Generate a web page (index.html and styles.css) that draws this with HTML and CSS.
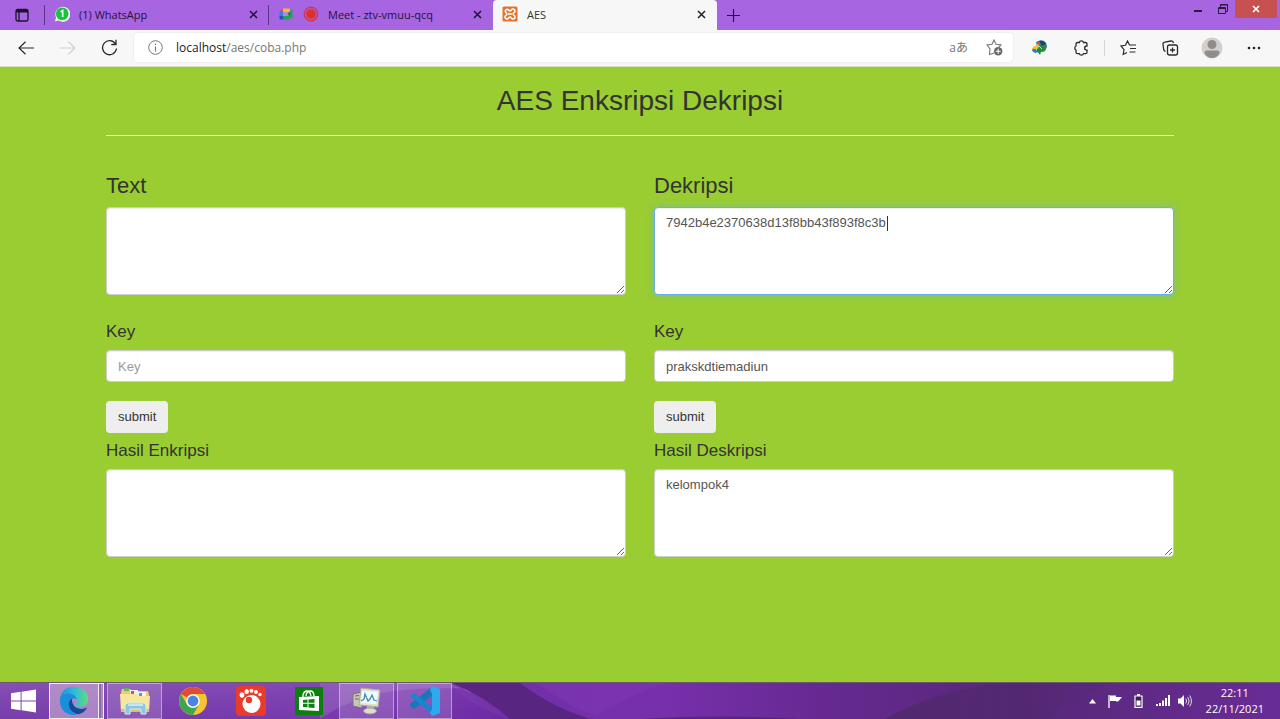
FILE: index.html
```html
<!DOCTYPE html>
<html lang="id">
<head>
<meta charset="utf-8">
<meta name="viewport" content="width=device-width, initial-scale=1">
<title>AES</title>
<link rel="stylesheet" href="styles.css">
</head>
<body>
<header class="browser">
  <div class="tabstrip">
    <button class="tab-actions" aria-label="Tab actions"><svg width="14" height="14" viewBox="0 0 14 14" fill="none" stroke="#1d1230" stroke-width="1.3"><rect x="1" y="1.5" width="12" height="11.5" rx="1.8"/><path d="M1 3h12" stroke-width="3"/><path d="M4 4v9"/></svg></button>
    <div class="tab">
      <svg width="16" height="16" viewBox="0 0 17 17"><path d="M1 16.500l1.200-4.300A8 8 0 1 1 5 15.400z" fill="#e9f6e9"/><circle cx="8.700" cy="8.300" r="6.700" fill="#17c53c"/><path d="M7 6.200l2.200-1.400v7" fill="none" stroke="#fff" stroke-width="1.700"/></svg>
      <span class="tab-title">(1) WhatsApp</span>
      <button class="tab-close" aria-label="Close tab"><svg width="9" height="9" viewBox="0 0 9 9" stroke="#1d1230" stroke-width="1.500"><path d="M1 1l7 7M8 1l-7 7"/></svg></button>
    </div>
    <div class="tab">
      <svg width="16" height="16" viewBox="0 0 16 16"><path d="M5 2.500h6q1 0 1 1V6H5z" fill="#f5bd21"/><path d="M1.500 6L5 2.500V6z" fill="#e8453c"/><path d="M1.500 6H5v4H1.500z" fill="#3b79dd"/><path d="M1.500 10H5v3.500H2.500q-1 0-1-1z" fill="#1f4fc0"/><path d="M5 10h7v2.500q0 1-1 1H5zM12 5l2.500-2v10L12 11z" fill="#20a650"/><path d="M5 6h5l2 2-2 2H5z" fill="#b28ad8"/><path d="M9.500 8L12 5.500v5z" fill="#167b38"/></svg>
      <svg width="16" height="16" viewBox="0 0 16 16"><circle cx="8" cy="8" r="6.800" fill="#b458a8" stroke="#d9304b" stroke-width="1.200"/><circle cx="8" cy="8" r="4.700" fill="#de3029"/></svg>
      <span class="tab-title">Meet - ztv-vmuu-qcq</span>
      <button class="tab-close" aria-label="Close tab"><svg width="9" height="9" viewBox="0 0 9 9" stroke="#1d1230" stroke-width="1.500"><path d="M1 1l7 7M8 1l-7 7"/></svg></button>
    </div>
    <div class="tab tab-active">
      <svg width="16" height="16" viewBox="0 0 16 16"><rect x=".5" y=".5" width="15" height="15" rx="1.500" fill="#e2752f"/><path d="M5.300 3.200a2 2 0 0 0-1 3.700q1.200 1.100 0 2.200a2 2 0 1 0 2.600 2.500q1.100-1.100 2.200 0a2 2 0 1 0 2.600-2.500q-1.200-1.100 0-2.200a2 2 0 1 0-2.600-2.500q-1.100 1.100-2.200 0a2 2 0 0 0-1.600-1.200zM6 8h4" fill="none" stroke="#fff" stroke-width="1.500"/></svg>
      <span class="tab-title">AES</span>
      <button class="tab-close" aria-label="Close tab"><svg width="9" height="9" viewBox="0 0 9 9" stroke="#222" stroke-width="1.500"><path d="M1 1l7 7M8 1l-7 7"/></svg></button>
    </div>
    <button class="new-tab" aria-label="New tab"><svg width="13" height="13" viewBox="0 0 13 13" stroke="#1d1230" stroke-width="1.200"><path d="M6.500 0v13M0 6.500h13"/></svg></button>
    <div class="window-buttons">
      <button class="window-button" aria-label="Minimize"><svg width="8" height="10" viewBox="0 0 8 10"><path d="M0 6h8v2H0z" fill="#2a1a45"/></svg></button>
      <button class="window-button" aria-label="Restore"><svg width="10" height="10" viewBox="0 0 10 10" fill="none" stroke="#2a1a45"><path d="M.5 3.500h7v6h-7zM.5 4.500h7M2.500 3V.5h7v7H8M2.500 1h7"/></svg></button>
      <button class="window-button window-close" aria-label="Close"><svg width="8" height="8" viewBox="0 0 8 8" stroke="#fff" stroke-width="1.700"><path d="M1 1l6 6M7 1l-6 6"/></svg></button>
    </div>
  </div>
  <nav class="toolbar">
    <button class="tool" aria-label="Back"><svg width="16" height="14" viewBox="0 0 16 14" fill="none" stroke="#2b2b2b" stroke-width="1.200"><path d="M16 7H1M7.500.7L1 7l6.500 6.300"/></svg></button>
    <button class="tool" aria-label="Forward"><svg width="16" height="14" viewBox="0 0 16 14" fill="none" stroke="#d2d2d2" stroke-width="1.200"><path d="M0 7h15M8.500.7L15 7l-6.500 6.300"/></svg></button>
    <button class="tool tool-refresh" aria-label="Refresh"><svg width="17" height="17" viewBox="0 0 17 17" fill="none" stroke="#2b2b2b" stroke-width="1.300"><path d="M15.500 9.500A7 7 0 1 1 14.500 5M15 .8V5.500h-4.700"/></svg></button>
    <div class="address">
      <svg width="15" height="15" viewBox="0 0 15 15" fill="none" stroke="#777"><circle cx="7.500" cy="7.500" r="6.800"/><path d="M7.500 6.500v5M7.500 3.500v1.500" stroke-width="1.200"/></svg>
      <a class="url" href="#"><span class="url-host">localhost</span>/aes/coba.php</a>
      <button class="translate" aria-label="Translate">aあ</button>
      <button class="favorite" aria-label="Add to favorites"><svg width="17" height="17" viewBox="0 0 17 17"><path d="M8.300 14L3.500 15.500 4 10 1 6l5-.7L8 1l2 4.300 5 .7-2 2" fill="none" stroke="#777" stroke-width="1.100"/><circle cx="12.200" cy="12.200" r="4.200" fill="#666"/><path d="M12.200 9.700v5M9.700 12.200h5" stroke="#fff" stroke-width="1.100"/></svg></button>
    </div>
    <div class="tools">
      <button class="tool" aria-label="Download manager"><svg width="17" height="15" viewBox="0 0 17 15"><path d="M5 2q5-3 8-1t3 6l-3 4H7z" fill="#2f80c9"/><path d="M8 1q5-1 7 3l-4 3z" fill="#2b4552"/><path d="M6.500 1l3 2-2 2.500z" fill="#e94b2e"/><path d="M2 7l5-3 1 2-4 6Q0 12 1 9z" fill="#f1c52c"/><path d="M1 10q1-2 4-1l3 3-4 1q-2-.5-3-3z" fill="#4379bd"/><path d="M6 8l6-3 3.500 1.500q0 3-2 5l-3.500.5-1 3-3-4z" fill="#248b36"/><path d="M5 10l3-4 3 3" fill="none" stroke="#bfe08c"/></svg></button>
      <button class="tool" aria-label="Extensions"><svg width="15" height="16" viewBox="0 0 15 16" fill="none" stroke="#2b2b2b" stroke-width="1.300"><path d="M3.500 2.500h1.800q.4-1.700 2.100-1.700t2.100 1.700h2q1.500 0 1.500 1.500v2q-2.500.2-2.500 2.100t2.500 2.100v2q0 1.500-1.500 1.500h-2q-.4 1.500-2.100 1.500t-2.100-1.500H3.500Q2 13.700 2 12.200v-2Q.8 9.700.8 8.100T2 6V4q0-1.500 1.500-1.500z"/></svg></button>
      <span class="divider"></span>
      <button class="tool" aria-label="Favorites"><svg width="17" height="16" viewBox="0 0 17 16" fill="none" stroke="#2b2b2b" stroke-width="1.200"><path d="M7 12.500L3.200 14.500 4 9.700 1 6l4.500-.7L7.500 1l2 4H16M10 8.500h6M9.500 12h6"/></svg></button>
      <button class="tool" aria-label="Collections"><svg width="17" height="16" viewBox="0 0 17 16" fill="none" stroke="#2b2b2b" stroke-width="1.300"><rect x="5.500" y="5" width="10" height="10" rx="2"/><path d="M3.500 11.500Q2 11 1.700 9.500L1 4.500Q.8 2.500 2.700 2.200L9 1q2-.3 2.500 2M10.500 7.500v5M8 10h5"/></svg></button>
      <button class="tool" aria-label="Profile"><svg width="22" height="22" viewBox="0 0 22 22"><circle cx="11" cy="11" r="10.500" fill="#d2d0ce"/><circle cx="11" cy="7.500" r="4.500" fill="#908c8a"/><path d="M3.500 16q0-2.500 2.500-2.500h10q2.500 0 2.500 2.500-2.500 5-7.500 5t-7.500-5z" fill="#908c8a"/></svg></button>
      <button class="tool" aria-label="Settings and more"><svg width="14" height="4" viewBox="0 0 14 4" fill="#222"><circle cx="2" cy="2" r="1.300"/><circle cx="7" cy="2" r="1.300"/><circle cx="12" cy="2" r="1.300"/></svg></button>
    </div>
  </nav>
</header>

<main class="page">
  <div class="container">
    <h1 class="title">AES Enksripsi Dekripsi</h1>
    <hr class="rule">
    <div class="columns">
      <form class="panel">
        <label class="heading" for="plain">Text</label>
        <textarea class="control area" id="plain"></textarea>
        <label class="label label-key" for="key1">Key</label>
        <input class="control" id="key1" type="text" placeholder="Key">
        <button class="submit" type="button">submit</button>
        <label class="label" for="result1">Hasil Enkripsi</label>
        <textarea class="control area" id="result1"></textarea>
      </form>
      <form class="panel">
        <label class="heading" for="cipher">Dekripsi</label>
        <textarea class="control area area-editing" id="cipher" spellcheck="false">7942b4e2370638d13f8bb43f893f8c3b</textarea>
        <label class="label label-key" for="key2">Key</label>
        <input class="control" id="key2" type="text" value="prakskdtiemadiun">
        <button class="submit" type="button">submit</button>
        <label class="label" for="result2">Hasil Deskripsi</label>
        <textarea class="control area" id="result2" spellcheck="false">kelompok4</textarea>
      </form>
    </div>
  </div>
</main>

<footer class="taskbar">
  <svg class="wallpaper" viewBox="0 0 1280 37" preserveAspectRatio="none">
    <defs>
      <linearGradient id="wall"><stop offset="0" stop-color="#8650b4"/><stop offset=".3" stop-color="#8446b5"/><stop offset=".4" stop-color="#722fa8"/><stop offset=".52" stop-color="#7630ab"/><stop offset=".65" stop-color="#652990"/><stop offset=".8" stop-color="#562878"/><stop offset="1" stop-color="#692c96"/></linearGradient>
      <linearGradient id="shade" x2="0" y2="1"><stop offset="0" stop-color="#4d1590" stop-opacity="0"/><stop offset="1" stop-color="#5f1d9c" stop-opacity=".35"/></linearGradient>
      <linearGradient id="fade"><stop offset="0" stop-color="#4d2867" stop-opacity=".8"/><stop offset="1" stop-color="#4d2867" stop-opacity="0"/></linearGradient>
    </defs>
    <path d="M0 0h1280v37H0z" fill="url(#wall)"/>
    <path d="M0 0h450q20 24 60 37H0z" fill="url(#shade)"/>
    <path d="M320 37Q360 8 420 6t50 4L450 0H320z" fill="#a67ac9" opacity=".35"/>
    <path d="M452 0h68q30 24 70 37h-80Q485 14 452 0z" fill="#582680"/>
    <path d="M536 0q30 22 60 34 40-24 70-34z" fill="#8540bd" opacity=".3"/>
    <path d="M885 37Q930 10 1000 0h120q-60 20-70 37z" fill="url(#fade)"/>
    <path d="M640 37q80-5 160 0z" fill="#4b1c70" opacity=".6"/>
  </svg>
  <div class="tasks">
    <button class="start" aria-label="Start"><svg width="25" height="24" viewBox="0 0 26 24" fill="#fff"><path d="M0 4l10-1.500v9H0zM11 2.300L26 0v11.500H11zM0 12.500h10v9L0 20zM11 12.500h15V24l-15-2.300z"/></svg></button>
    <button class="task task-open task-current" aria-label="Microsoft Edge"><svg width="30" height="30" viewBox="0 0 32 32"><defs><linearGradient id="edgeTop"><stop offset="0" stop-color="#238cd3"/><stop offset=".55" stop-color="#30bfdb"/><stop offset="1" stop-color="#63dc71"/></linearGradient></defs><path d="M1 15Q2 1 16 1q15 1 15 13 0 8-9 8-4 0-5-2 3-2 2-6-2-5-8-5Q4 9 1 15z" fill="url(#edgeTop)"/><path d="M1 14q3-6 9-6 7 0 9 6-6-2-8 3-2 9 8 14Q3 32 1 17z" fill="#188fda"/><path d="M14 13q-5 3-3 10 3 7 10 7 6-1 9-7-6 3-12 0-5-4-4-10z" fill="#124c98"/></svg></button>
    <button class="task task-open" aria-label="File Explorer"><svg width="32" height="28" viewBox="0 0 32 28"><path d="M2 5l1-3h8l2 2h16l1 3v17H2z" fill="#e6cc71"/><path d="M5 1h5v3H5z" fill="#70ae61"/><path d="M11 3h8v5h-8z" fill="#eef0ef"/><path d="M12 4h3v3h-3z" fill="#c65c4b"/><path d="M19 5h8v5h-8z" fill="#f4f5ef"/><path d="M20 6h3v3h-3z" fill="#519bc4"/><path d="M1 7h17l2 2h11l-1 16H2z" fill="#f7e69d"/><path d="M2 22h28v3H2z" fill="#ddc167"/><path d="M6 27v-8q0-3 3-3h15q3 0 3 3v8h-5v-5H11v5z" fill="#8bc6e2" stroke="#d1edf5"/><path d="M9 18h15" stroke="#c6e8f1" stroke-width="2"/></svg></button>
    <button class="task" aria-label="Google Chrome"><svg width="28" height="28" viewBox="0 0 28 28"><circle cx="14" cy="14" r="14" fill="#f6c333"/><path d="M1.900 7A14 14 0 0 1 26.100 7H14a7 7 0 0 0-6 3.500z" fill="#df4a3b"/><path d="M1.900 7A14 14 0 0 0 14 28l6-10.500a7 7 0 0 1-12 0z" fill="#41a452"/><circle cx="14" cy="14" r="6.800" fill="#fff"/><circle cx="14" cy="14" r="5.400" fill="#4b83e8"/></svg></button>
    <button class="task" aria-label="GOM Player"><svg width="30" height="30" viewBox="0 0 30 30"><rect width="30" height="30" rx="4" fill="#e83b2b"/><circle cx="15.500" cy="18" r="9" fill="#fff"/><circle cx="13" cy="14" r="3.200" fill="#e83b2b"/><g fill="#fff"><ellipse cx="6" cy="9" rx="2.400" ry="2.700"/><ellipse cx="10.700" cy="5.500" rx="2.200" ry="2.500"/><circle cx="15.500" cy="4.800" r="2"/><circle cx="20" cy="6" r="1.900"/><circle cx="24" cy="8.500" r="1.700"/></g></svg></button>
    <button class="task" aria-label="Store"><svg width="28" height="28" viewBox="0 0 28 28"><path d="M0 0h28v28H0z" fill="#0c800e"/><path d="M4 10l20-1v15L4 23z" fill="#fff"/><path d="M8 10V8q1-4 4-4t4 5M11 9q0-4 4-5 4 0 4 5" fill="none" stroke="#fff" stroke-width="1.300"/><path d="M8 13l4.500-.4v3.200H8zM13.500 12.500l6-.5v3.800h-6zM8 16.700h4.500v3.600L8 20zM13.500 16.700h6V21l-6-.6z" fill="#0c800e"/></svg></button>
    <button class="task task-open" aria-label="Task Manager"><svg width="30" height="28" viewBox="0 0 30 28"><path d="M1 7l9-2v16l-9-2z" fill="#c9c7b6" stroke="#77766f"/><path d="M3 9l4-.5M3 12h4" stroke="#666"/><path d="M9 1l19 2-2 17-19-2z" fill="#e2e0d2" stroke="#aaa895"/><path d="M10 4l16 1-2 12-15-1z" fill="#f2fbff"/><path d="M9 14l3-2 1-5 3 7 2-2 2-4 2 5 3 1" fill="none" stroke="#418dba" stroke-width="1.300"/><path d="M15 19l7 1 1 4-8-1z" fill="#bebdac"/><ellipse cx="18" cy="24" rx="6.500" ry="3" fill="#deddd0" stroke="#999"/></svg></button>
    <button class="task task-open" aria-label="Visual Studio Code"><svg width="30" height="30" viewBox="0 0 30 30"><path d="M22 1v9L4 23l-4-3v-2z" fill="#1877b9"/><path d="M0 10l4-3 19 15v7z" fill="#1687cf"/><path d="M22 0l8 3v24l-8 3-2-3 2-4V8l-2-4z" fill="#2da9ed"/></svg></button>
  </div>
  <div class="tray">
    <button class="tray-icon" aria-label="Show hidden icons"><svg width="7" height="5" viewBox="0 0 7 5"><path d="M0 4.500L3.500 0 7 4.500z" fill="#fff"/></svg></button>
    <button class="tray-icon" aria-label="Action Center"><svg width="14" height="14" viewBox="0 0 14 14"><path d="M1 1v13" stroke="#fff" stroke-width="1.300"/><path d="M2 1.500h6v1.500h6l-2 2.500-2 2H8V7H2z" fill="#fff"/></svg></button>
    <button class="tray-icon tray-battery" aria-label="Battery"><svg width="9" height="14" viewBox="0 0 9 14"><path d="M3 0h3v2H3z" fill="#fff"/><path d="M1 2h7v11.300H1z" fill="#3a2056" stroke="#fff" stroke-width="1.200"/><path d="M2.500 6.500h4v5h-4z" fill="#fff"/></svg></button>
    <button class="tray-icon" aria-label="Network"><svg width="14" height="12" viewBox="0 0 14 12" fill="#fff"><path d="M0 9h2v2H0zM3 8h2v3H3zM6 5.500h2V11H6zM9 3h2v8H9zM12 0h2v11h-2z"/></svg></button>
    <button class="tray-icon" aria-label="Volume"><svg width="14" height="14" viewBox="0 0 14 14"><path d="M0 4.500h2.500L6 1v12L2.500 9.500H0z" fill="#fff"/><path d="M7.700 4.500q2 2.500 0 5M9.700 3q3 4 0 8M11.700 1.500q3.500 5.500 0 11" fill="none" stroke="#ddd"/></svg></button>
    <div class="clock"><span>22:11</span><span>22/11/2021</span></div>
  </div>
</footer>
</body>
</html>
```
FILE: styles.css
```css
* { box-sizing: border-box; }

body {
  margin: 0;
  min-height: 100vh;
  display: flex;
  flex-direction: column;
  background: #9acd32;
  color: #333;
  font: 13px/19px "Liberation Sans", Arial, sans-serif;
}

button {
  margin: 0;
  padding: 0;
  border: 0;
  background: none;
  color: inherit;
  font: inherit;
}

svg { display: block; flex: none; }

/* Browser window */
.browser { font-family: "Open Sans", "Noto Sans", sans-serif; }

.tabstrip {
  display: flex;
  height: 30px;
  background: #a865e2;
}

.tab-actions {
  width: 45px;
  display: grid;
  place-items: center;
  border-right: 1px solid #5b3389;
  border-image: linear-gradient(transparent 20%, #5b3389 20% 80%, transparent 80%) 1;
}

.tab {
  flex: 0 1 224px;
  min-width: 0;
  display: flex;
  align-items: center;
  gap: 9px;
  padding: 0 10px 2px 9px;
  border-right: 1px solid transparent;
  border-image: linear-gradient(transparent 20%, #5b3389 20% 80%, transparent 80%) 1;
  color: #24133d;
  font-size: 11px;
}

.tab:has(+ .tab-active) { border-image: none; }

.tab-active {
  padding-right: 11px;
  border: 0;
  border-image: none;
  border-radius: 4px 4px 0 0;
  background: #f7f7f7;
  color: #333;
}

.tab-title {
  flex: 1;
  overflow: hidden;
  white-space: nowrap;
}

.new-tab {
  width: 32px;
  display: grid;
  place-items: center;
}

.window-buttons {
  display: flex;
  align-items: flex-start;
  margin-left: auto;
  padding-right: 3px;
}

.window-button {
  width: 25px;
  height: 18px;
  display: grid;
  place-items: center;
}

.window-close { width: 42px; background: #c75050; }

.toolbar {
  display: flex;
  align-items: center;
  height: 37px;
  padding: 0 5px 1px;
  background: #f7f7f7;
  border-bottom: 1px solid #d5dfc0;
}

.tool {
  width: 42px;
  height: 30px;
  display: grid;
  place-items: center;
}

.tool-refresh { width: 40px; }

.address {
  flex: 1;
  display: flex;
  align-items: center;
  height: 29px;
  margin: 0 5px;
  padding: 0 10px 0 14px;
  border-radius: 4px;
  background: #fff;
  box-shadow: 0 0 2px #ddd;
}

.url {
  flex: 1;
  margin-left: 13px;
  color: #777;
  font-size: 12px;
  text-decoration: none;
}

.url-host { color: #222; }

.translate {
  margin-right: 18px;
  color: #777;
  font: 12px/16px "Open Sans", "Noto Sans CJK JP", sans-serif;
}

.tools { display: flex; align-items: center; }

.divider {
  width: 1px;
  height: 16px;
  margin: 0 2px;
  background: #d5d5d5;
}

/* Page */
.page { flex: 1; }

.container {
  width: calc(100% - 30px);
  max-width: 1068px;
  margin: 0 auto;
  padding: 18px 0;
}

.title {
  margin: 0;
  font-size: 28px;
  font-weight: 400;
  line-height: 31px;
  text-align: center;
}

.rule {
  margin: 19px 0 38px;
  border: 0;
  border-top: 1px solid #eee;
}

.columns {
  display: grid;
  grid-template-columns: 1fr 1fr;
  gap: 28px;
}

.panel {
  display: flex;
  flex-direction: column;
  align-items: flex-start;
}

.heading {
  margin-bottom: 9px;
  font-size: 22px;
  line-height: 24px;
}

.label {
  margin: 9px 0;
  font-size: 17px;
  line-height: 18px;
}

.label-key { margin-top: 28px; }

.control {
  width: 100%;
  height: 32px;
  margin: 0;
  padding: 6px 11px;
  border: 1px solid #ccc;
  border-radius: 4px;
  background: #fff;
  box-shadow: inset 0 1px 1px rgba(0, 0, 0, .075);
  color: #555;
  font: inherit;
  outline: 0;
}

.control::placeholder { color: #999; }

.area { height: 88px; padding-top: 5px; resize: vertical; }

.area-editing {
  border-color: #66afe9;
  background: linear-gradient(#333, #333) 232px 8px / 1px 15px no-repeat #fff;
  box-shadow: inset 0 1px 1px rgba(0, 0, 0, .075), 0 0 7px rgba(102, 175, 233, .6);
}

.submit {
  margin-top: 19px;
  padding: 6px 12px 7px;
  border-radius: 4px;
  background: #eee;
}

/* Taskbar */
.taskbar {
  position: relative;
  display: flex;
  justify-content: space-between;
  height: 37px;
  overflow: hidden;
  border-top: 1px solid #6a5a6c;
  color: #fff;
  font: 11px/16px "Open Sans", "Noto Sans", sans-serif;
}

.wallpaper {
  position: absolute;
  inset: 0;
  width: 100%;
  height: 100%;
}

.tasks, .tray { position: relative; display: flex; }

.tasks { gap: 3px; }

.start {
  width: 46px;
  display: grid;
  place-items: center;
}

.task {
  width: 55px;
  display: grid;
  place-items: center;
}

.task-open {
  border: 1px solid rgba(255, 255, 255, .4);
  background: rgba(255, 255, 255, .15);
}

.task-current {
  padding-right: 6px;
  border: 1px solid #eee;
  background: linear-gradient(90deg, transparent 48px, #eee 48px 49px, #8c6aa8 49px 51px, transparent 51px), rgba(215, 190, 220, .55);
}

.tray { align-items: center; padding-right: 16px; }

.tray-icon {
  width: 22px;
  height: 36px;
  display: grid;
  place-items: center;
}

.tray-battery { width: 26px; }

.clock {
  display: flex;
  flex-direction: column;
  align-items: center;
  margin-left: 10px;
}
```
